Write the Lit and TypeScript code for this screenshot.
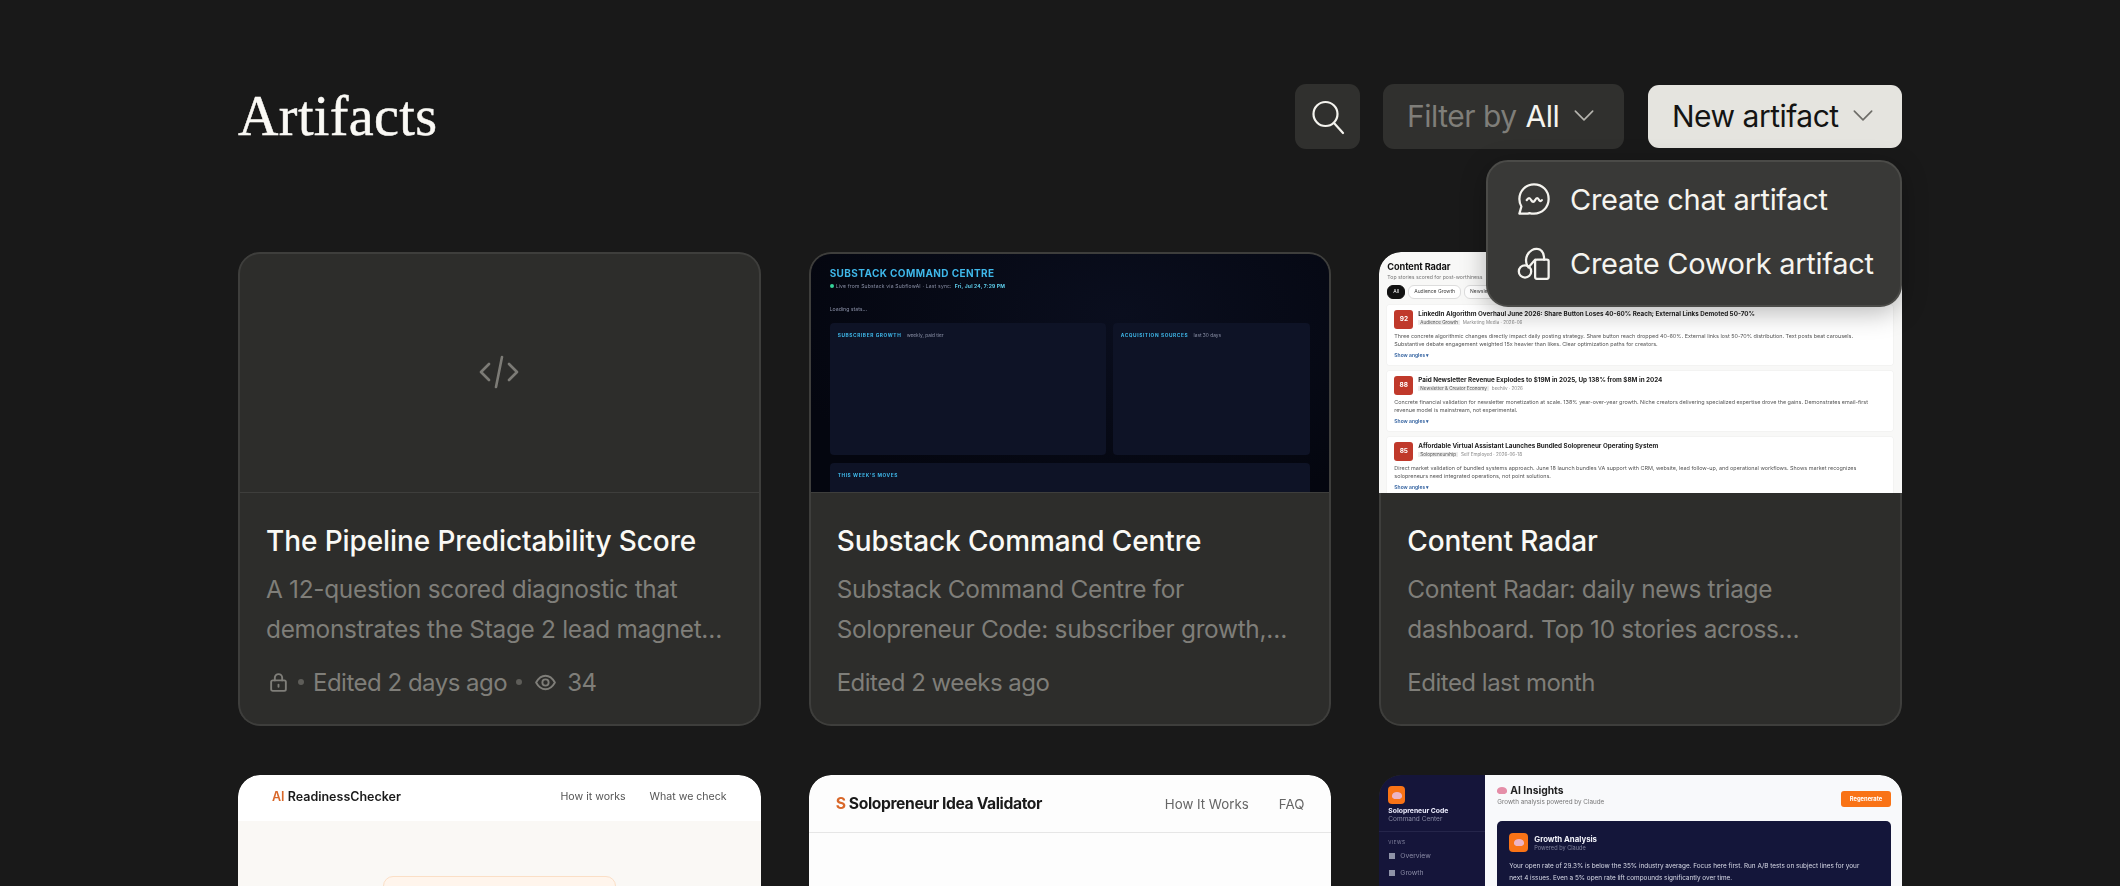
import { LitElement, css, html, nothing } from 'lit';
import { customElement } from 'lit/decorators.js';

type Artifact = {
  title?: string;
  lines?: string[];
  edited?: string;
  preview: 'code' | 'substack' | 'radar' | 'readiness' | 'validator' | 'insights';
  locked?: boolean;
  views?: number;
};

const artifacts: Artifact[] = [
  {
    title: 'The Pipeline Predictability Score',
    lines: ['A 12-question scored diagnostic that', 'demonstrates the Stage 2 lead magnet…'],
    edited: 'Edited 2 days ago',
    preview: 'code',
    locked: true,
    views: 34,
  },
  {
    title: 'Substack Command Centre',
    lines: ['Substack Command Centre for', 'Solopreneur Code: subscriber growth,…'],
    edited: 'Edited 2 weeks ago',
    preview: 'substack',
  },
  {
    title: 'Content Radar',
    lines: ['Content Radar: daily news triage', 'dashboard. Top 10 stories across…'],
    edited: 'Edited last month',
    preview: 'radar',
  },
  { preview: 'readiness' },
  { preview: 'validator' },
  { preview: 'insights' },
];

const stories = [
  {
    score: 92,
    title: 'LinkedIn Algorithm Overhaul June 2026: Share Button Loses 40-60% Reach; External Links Demoted 50-70%',
    tag: 'Audience Growth',
    source: 'Marketing Media · 2026-06',
    text: [
      'Three concrete algorithmic changes directly impact daily posting strategy. Share button reach dropped 40-60%. External links lost 50-70% distribution. Text posts beat carousels.',
      'Substantive debate engagement weighted 15x heavier than likes. Clear optimization paths for creators.',
    ],
  },
  {
    score: 88,
    title: 'Paid Newsletter Revenue Explodes to $19M in 2025, Up 138% from $8M in 2024',
    tag: 'Newsletter & Creator Economy',
    source: 'beehiiv · 2026',
    text: [
      'Concrete financial validation for newsletter monetization at scale. 138% year-over-year growth. Niche creators delivering specialized expertise drove the gains. Demonstrates email-first',
      'revenue model is mainstream, not experimental.',
    ],
  },
  {
    score: 85,
    title: 'Affordable Virtual Assistant Launches Bundled Solopreneur Operating System',
    tag: 'Solopreneurship',
    source: 'Self Employed · 2026-06-18',
    text: [
      'Direct market validation of bundled systems approach. June 18 launch bundles VA support with CRM, website, lead follow-up, and operational workflows. Shows market recognizes',
      'solopreneurs need integrated operations, not point solutions.',
    ],
  },
];

const chevron = html`<svg class="chev" viewBox="0 0 20 12"><path d="M2 2l8 8 8-8" /></svg>`;

@customElement('app-root')
export class AppRoot extends LitElement {
  static styles = css`
    :host {
      display: block;
      height: 886px;
      overflow: hidden;
      background: #191919;
      font-family: Inter, 'Noto Sans', sans-serif;
      color: #f5f4ef;
    }
    .page {
      width: 1664px;
      margin-left: 238px;
    }
    svg {
      fill: none;
      stroke: currentColor;
      stroke-linecap: round;
      stroke-linejoin: round;
      display: block;
    }

    header {
      position: relative;
      height: 252px;
      padding-top: 84px;
      box-sizing: border-box;
      display: flex;
      align-items: flex-start;
    }
    h1 {
      margin: 0;
      flex: 1;
      font: 400 56px/64px 'Liberation Serif', serif;
      letter-spacing: 0.4px;
      -webkit-text-stroke: 0.5px #faf9f5;
      color: #faf9f5;
    }
    .btn {
      height: 65px;
      border-radius: 11px;
      background: #30302e;
      display: flex;
      align-items: center;
      box-sizing: border-box;
      padding-bottom: 2px;
      font-size: 30px;
      letter-spacing: -0.5px;
    }
    .search {
      width: 65px;
      justify-content: center;
      color: #f5f4ef;
      margin-right: 23px;
      padding-bottom: 0;
    }
    .search svg {
      width: 36px;
      height: 36px;
      stroke-width: 2.2;
    }
    .filter {
      width: 241px;
      padding: 0 24px 2px;
      margin-right: 24px;
      color: #7f7e79;
    }
    .filter b {
      font-weight: 400;
      color: #f5f4ef;
      margin: 0 14px 0 9px;
    }
    .chev {
      width: 22px;
      height: 13px;
      stroke-width: 1.5;
    }
    .filter .chev {
      color: #b5b4ae;
    }
    .new {
      width: 254px;
      height: 63px;
      margin-top: 1px;
      padding: 0 28px 2px 24px;
      background: #e5e4df;
      color: #141413;
      justify-content: space-between;
    }
    .new .chev {
      color: #6d6c67;
    }

    .menu {
      position: absolute;
      z-index: 5;
      right: 0;
      top: 160px;
      width: 416px;
      height: 147px;
      box-sizing: border-box;
      padding: 5px 0 0 28px;
      border: 2px solid #4b4b48;
      border-radius: 22px;
      background: #393937;
      box-shadow: 0 6px 26px rgba(0, 0, 0, 0.28);
    }
    .menu div {
      height: 64px;
      display: flex;
      align-items: center;
      gap: 18px;
      font-size: 29px;
      letter-spacing: -0.3px;
      color: #f5f4ef;
    }
    .menu svg {
      width: 36px;
      height: 36px;
      stroke-width: 2;
    }

    .grid {
      display: grid;
      grid-template-columns: repeat(3, 1fr);
      gap: 49px 48px;
    }
    .card {
      height: 474px;
      border-radius: 22px;
      overflow: hidden;
      background: #2d2d2b;
    }
    .preview {
      height: 241px;
      box-sizing: border-box;
      overflow: hidden;
      border: 2px solid #3e3e3c;
      border-bottom-width: 1px;
      border-radius: 22px 22px 0 0;
      color: #111;
    }
    .preview.light {
      border: 0;
    }
    .blur {
      filter: blur(0.3px);
    }
    .body {
      height: 233px;
      box-sizing: border-box;
      padding: 28px 26px 0;
      border: 2px solid #3e3e3c;
      border-top: 0;
      border-radius: 0 0 22px 22px;
    }
    h2 {
      margin: 0;
      font-size: 28px;
      line-height: 40px;
      font-weight: 500;
      letter-spacing: -0.1px;
      color: #faf9f5;
    }
    .desc {
      margin-top: 9px;
      font-size: 24.4px;
      line-height: 39.5px;
      letter-spacing: -0.3px;
      color: #7f7e79;
      white-space: nowrap;
    }
    .meta {
      margin-top: 13px;
      height: 40px;
      display: flex;
      align-items: center;
      font-size: 24px;
      letter-spacing: -0.5px;
      color: #7f7e79;
      white-space: nowrap;
    }
    .meta svg {
      width: 21px;
      height: 21px;
      stroke-width: 1.8;
      margin-left: 2px;
    }
    .meta .dot {
      width: 6px;
      height: 6px;
      border-radius: 50%;
      background: #5e5d59;
      margin: 0 9px;
    }
    .meta .eye {
      width: 23px;
      height: 23px;
      margin: 0 10px 0 3px;
    }

    .code {
      height: 100%;
      display: flex;
      align-items: center;
      justify-content: center;
      color: #7c7b76;
    }
    .code svg {
      width: 42px;
      height: 36px;
      stroke-width: 2.6;
      margin-bottom: 2px;
    }

    .substack {
      height: 100%;
      padding: 12px 19px 0;
      box-sizing: border-box;
      background: radial-gradient(ellipse at 60% 25%, #0a0e1e, #04060f 80%);
      font-family: Inter, sans-serif;
      color: #8a90a6;
    }
    .substack h3 {
      margin: 0;
      font-size: 10px;
      line-height: 14px;
      font-weight: 700;
      letter-spacing: 0.4px;
      color: #3fb8ea;
    }
    .status {
      display: flex;
      align-items: center;
      gap: 2px;
      font-size: 5px;
      line-height: 8px;
      margin-top: 2px;
      letter-spacing: 0.2px;
    }
    .status i {
      width: 4px;
      height: 4px;
      border-radius: 50%;
      background: #34d399;
    }
    .status b {
      color: #5fd0ee;
      margin-left: 1px;
    }
    .loading {
      font-size: 5.2px;
      line-height: 8px;
      margin-top: 15px;
    }
    .panels {
      display: grid;
      grid-template-columns: 276px 197px;
      gap: 7px;
      margin-top: 10px;
    }
    .panel {
      height: 132px;
      border-radius: 4px;
      background: #0e1326;
      padding: 8px;
      box-sizing: border-box;
      font-size: 4.8px;
      line-height: 8px;
      white-space: nowrap;
    }
    .panel.wide {
      grid-column: 1 / 3;
      margin-top: 1px;
    }
    .panel b {
      font-weight: 700;
      letter-spacing: 0.6px;
      color: #3fb8ea;
      margin-right: 4px;
    }

    .radar {
      height: 100%;
      padding: 8px 9px 0 8px;
      box-sizing: border-box;
      background: #f8f8f7;
      font-family: Inter, sans-serif;
    }
    .radar h3 {
      margin: 0;
      font-size: 9.2px;
      line-height: 13px;
      font-weight: 700;
      letter-spacing: -0.1px;
    }
    .radar .sub {
      font-size: 5.2px;
      line-height: 7px;
      color: #777;
      margin-top: 1px;
    }
    .pills {
      display: flex;
      gap: 3px;
      margin-top: 4px;
      font-size: 5px;
    }
    .pills span {
      height: 12px;
      line-height: 11px;
      padding: 0 5px;
      border: 0.5px solid #ddd;
      border-radius: 6px;
      background: #fff;
      color: #444;
    }
    .pills span.on {
      background: #111;
      border-color: #111;
      color: #fff;
    }
    .story {
      height: 60px;
      margin-top: 6px;
      padding: 5px 7px;
      box-sizing: border-box;
      background: #fff;
      border-radius: 2px;
      box-shadow: 0 0 0 0.5px #eee;
      overflow: hidden;
    }
    .story-head {
      display: flex;
      gap: 5px;
    }
    .score {
      width: 19px;
      height: 19px;
      flex: none;
      border-radius: 3px;
      background: #c0392b;
      color: #fff;
      font-size: 6.5px;
      font-weight: 700;
      line-height: 19px;
      text-align: center;
    }
    .story-title {
      font-size: 6.3px;
      line-height: 9px;
      font-weight: 700;
      color: #222;
      white-space: nowrap;
    }
    .story-tag {
      font-size: 4.6px;
      line-height: 8px;
      color: #888;
    }
    .story-tag span {
      background: #eee;
      padding: 0 2px;
      margin-right: 3px;
      color: #555;
    }
    .story-text {
      margin-top: 3px;
      font-size: 5.45px;
      line-height: 8.2px;
      color: #555;
      white-space: nowrap;
    }
    .angles {
      margin-top: 3px;
      font-size: 5px;
      line-height: 8px;
      color: #2f5f9e;
      font-weight: 600;
    }

    .site {
      height: 100%;
      font-family: Inter, sans-serif;
    }
    .site nav {
      display: flex;
      align-items: center;
      justify-content: space-between;
      background: #fff;
      box-sizing: border-box;
    }
    .site nav div {
      display: flex;
    }
    .readiness {
      background: #faf8f5;
    }
    .readiness nav {
      height: 46px;
      padding: 0 34px 3px;
      font-size: 10.6px;
      color: #555;
    }
    .logo-a {
      font-size: 12.5px;
      font-weight: 600;
      color: #1a1a1a;
    }
    .logo-a em,
    .logo-b em {
      font-style: normal;
      color: #d9682a;
    }
    .readiness nav div {
      gap: 24px;
    }
    .hero {
      width: 231px;
      height: 30px;
      margin: 55px auto 0;
      border: 1px solid #fbdfc6;
      border-radius: 10px;
      background: #fff5ec;
    }
    .validator {
      background: #fdfdfd;
    }
    .validator nav {
      height: 58px;
      padding: 0 27px;
      background: #fdfdfd;
      border-bottom: 1px solid #e6e6e6;
      font-size: 13.3px;
      color: #666;
    }
    .logo-b {
      font-size: 15.7px;
      font-weight: 700;
      letter-spacing: -0.4px;
      color: #1a1a1a;
    }
    .validator nav div {
      gap: 30px;
    }

    .insights {
      height: 100%;
      display: flex;
      font-family: Inter, sans-serif;
      background: #f8f9fb;
    }
    .insights aside {
      width: 106px;
      flex: none;
      background: #15153a;
      color: #8a8ba5;
      font-size: 6.5px;
      box-sizing: border-box;
      padding-top: 11px;
    }
    .tile {
      display: flex;
      align-items: center;
      justify-content: center;
      background: #f97316;
      border-radius: 4px;
    }
    .tile.small {
      width: 17px;
      height: 18px;
      margin-left: 9px;
    }
    .tile.big {
      width: 19px;
      height: 19px;
      flex: none;
    }
    .brain {
      display: inline-block;
      width: 10px;
      height: 7px;
      border-radius: 50% 50% 40% 40%;
      background: #e58ea8;
    }
    .tile .brain {
      background: #ecb4c4;
    }
    .brand {
      padding: 3px 9px 8px;
      border-bottom: 1px solid #25254a;
      line-height: 8px;
    }
    .brand b {
      display: block;
      color: #eef;
      font-size: 6.8px;
      font-weight: 700;
    }
    .views {
      padding: 6px 9px 0;
      font-size: 4.6px;
      letter-spacing: 0.5px;
      line-height: 9px;
    }
    .item {
      display: flex;
      align-items: center;
      gap: 5px;
      padding: 0 10px;
      height: 17px;
      font-size: 6.8px;
    }
    .item i {
      width: 6px;
      height: 6px;
      background: #8f93a8;
    }
    .main {
      flex: 1;
      padding: 8px 11px 0 12px;
    }
    .main-top {
      display: flex;
      justify-content: space-between;
      height: 38px;
    }
    .main h3 {
      margin: 0;
      display: flex;
      align-items: center;
      gap: 3px;
      font-size: 10.3px;
      line-height: 14px;
      font-weight: 700;
      color: #222;
    }
    .main .sub {
      font-size: 6.3px;
      line-height: 10px;
      color: #777;
    }
    .regen {
      width: 50px;
      height: 16px;
      margin-top: 8px;
      border-radius: 3px;
      background: #f97316;
      color: #fff;
      font-size: 5.8px;
      font-weight: 700;
      line-height: 16px;
      text-align: center;
    }
    .analysis {
      height: 70px;
      padding: 12px 12px;
      box-sizing: border-box;
      border-radius: 5px;
      background: #14163a;
      color: #d9dbe8;
    }
    .analysis-head {
      display: flex;
      gap: 6px;
      line-height: 8px;
      font-size: 5.6px;
      color: #80839c;
    }
    .analysis-head b {
      display: block;
      font-size: 7.8px;
      line-height: 10px;
      margin-top: 1px;
      color: #f2f3fa;
    }
    .analysis p {
      margin: 8px 0 0;
      font-size: 6.4px;
      line-height: 12.4px;
      white-space: nowrap;
    }
  `;

  private renderPreview(a: Artifact) {
    switch (a.preview) {
      case 'code':
        return html`<div class="code">
          <svg viewBox="0 0 42 36"><path d="M11 10L3 18l8 8M31 10l8 8-8 8M24 3l-6 30" /></svg>
        </div>`;
      case 'substack':
        return html`<div class="substack blur">
          <h3>SUBSTACK COMMAND CENTRE</h3>
          <div class="status">
            <i></i>Live from Substack via SubflowAI · Last sync: <b>Fri, Jul 24, 7:29 PM</b>
          </div>
          <div class="loading">Loading stats...</div>
          <div class="panels">
            <div class="panel"><b>SUBSCRIBER GROWTH</b> weekly, paid tier</div>
            <div class="panel"><b>ACQUISITION SOURCES</b> last 30 days</div>
            <div class="panel wide"><b>THIS WEEK'S MOVES</b></div>
          </div>
        </div>`;
      case 'radar':
        return html`<div class="radar blur">
          <h3>Content Radar</h3>
          <div class="sub">Top stories scored for post-worthiness</div>
          <div class="pills">
            <span class="on">All</span><span>Audience Growth</span><span>Newsletter</span>
          </div>
          ${stories.map(
            (s) => html`<div class="story">
              <div class="story-head">
                <div class="score">${s.score}</div>
                <div>
                  <div class="story-title">${s.title}</div>
                  <div class="story-tag"><span>${s.tag}</span>${s.source}</div>
                </div>
              </div>
              <div class="story-text">${s.text[0]}<br />${s.text[1]}</div>
              <div class="angles">Show angles ▾</div>
            </div>`,
          )}
        </div>`;
      case 'readiness':
        return html`<div class="site readiness blur">
          <nav>
            <span class="logo-a"><em>AI</em> ReadinessChecker</span>
            <div><span>How it works</span><span>What we check</span></div>
          </nav>
          <div class="hero"></div>
        </div>`;
      case 'validator':
        return html`<div class="site validator blur">
          <nav>
            <span class="logo-b"><em>S</em> Solopreneur Idea Validator</span>
            <div><span>How It Works</span><span>FAQ</span></div>
          </nav>
        </div>`;
      case 'insights':
        return html`<div class="insights blur">
          <aside>
            <div class="tile small"><span class="brain"></span></div>
            <div class="brand"><b>Solopreneur Code</b>Command Center</div>
            <div class="views">VIEWS</div>
            <div class="item"><i></i>Overview</div>
            <div class="item"><i></i>Growth</div>
          </aside>
          <div class="main">
            <div class="main-top">
              <div>
                <h3><span class="brain"></span>AI Insights</h3>
                <div class="sub">Growth analysis powered by Claude</div>
              </div>
              <div class="regen">Regenerate</div>
            </div>
            <div class="analysis">
              <div class="analysis-head">
                <div class="tile big"><span class="brain"></span></div>
                <div><b>Growth Analysis</b>Powered by Claude</div>
              </div>
              <p>
                Your open rate of 29.3% is below the 35% industry average. Focus here first. Run A/B tests on subject lines for your<br />
                next 4 issues. Even a 5% open rate lift compounds significantly over time.
              </p>
            </div>
          </div>
        </div>`;
    }
  }

  private renderCard(a: Artifact) {
    const dark = a.preview === 'code' || a.preview === 'substack';
    return html`<article class="card">
      <div class="preview ${dark ? '' : 'light'}">${this.renderPreview(a)}</div>
      ${a.title
        ? html`<div class="body">
            <h2>${a.title}</h2>
            <div class="desc">${a.lines?.map((l) => html`<div>${l}</div>`)}</div>
            <div class="meta">
              ${a.locked
                ? html`<svg viewBox="0 0 20 20">
                      <rect x="3" y="8" width="14" height="10" rx="1.5" />
                      <path d="M6.5 8V5.5a3.5 3.5 0 017 0V8M10 12v2" />
                    </svg>
                    <span class="dot"></span>`
                : nothing}
              ${a.edited}
              ${a.views
                ? html`<span class="dot"></span>
                    <svg class="eye" viewBox="0 0 22 22">
                      <path d="M2 11c2.500-4.500 5.500-6.500 9-6.500s6.500 2 9 6.500c-2.500 4.500-5.500 6.500-9 6.500S4.500 15.500 2 11z" />
                      <circle cx="11" cy="11" r="3" />
                    </svg>
                    ${a.views}`
                : nothing}
            </div>
          </div>`
        : nothing}
    </article>`;
  }

  render() {
    return html`<div class="page">
      <header>
        <h1>Artifacts</h1>
        <div class="btn search">
          <svg viewBox="0 0 36 36"><circle cx="15.500" cy="15" r="12" /><path d="M24 24l9 10" /></svg>
        </div>
        <div class="btn filter">Filter by<b>All</b>${chevron}</div>
        <div class="btn new">New artifact ${chevron}</div>
        <div class="menu">
          <div>
            <svg viewBox="0 0 32 32">
              <path d="M3 29h7.500l1.500-.5c1.300.4 2.600.5 4 .5 7 0 13-5.500 13-13S23.500 3 16 3 3 9 3 16c0 2.500.6 4.700 1.800 6.700z" />
              <path d="M9.500 17c1.500-2.500 2.800-2.500 4 0 1.200 2 2.300 2 3.500 0 1.200-2.500 2.500-2.500 3.500 0 .7 1 1.500 1.200 2.500 0" />
            </svg>
            Create chat artifact
          </div>
          <div>
            <svg viewBox="0 0 32 32">
              <circle cx="8" cy="23.500" r="5.500" />
              <rect x="17" y="13" width="12" height="17" rx="1.500" />
              <path d="M10 18.500C8.500 15 8.500 12 10 9c2-4 6-6 9-5.500 3.500.5 6 3.500 6 9.500M17 13l-6 7" />
            </svg>
            Create Cowork artifact
          </div>
        </div>
      </header>
      <div class="grid">${artifacts.map((a) => this.renderCard(a))}</div>
    </div>`;
  }
}

declare global {
  interface HTMLElementTagNameMap {
    'app-root': AppRoot;
  }
}
